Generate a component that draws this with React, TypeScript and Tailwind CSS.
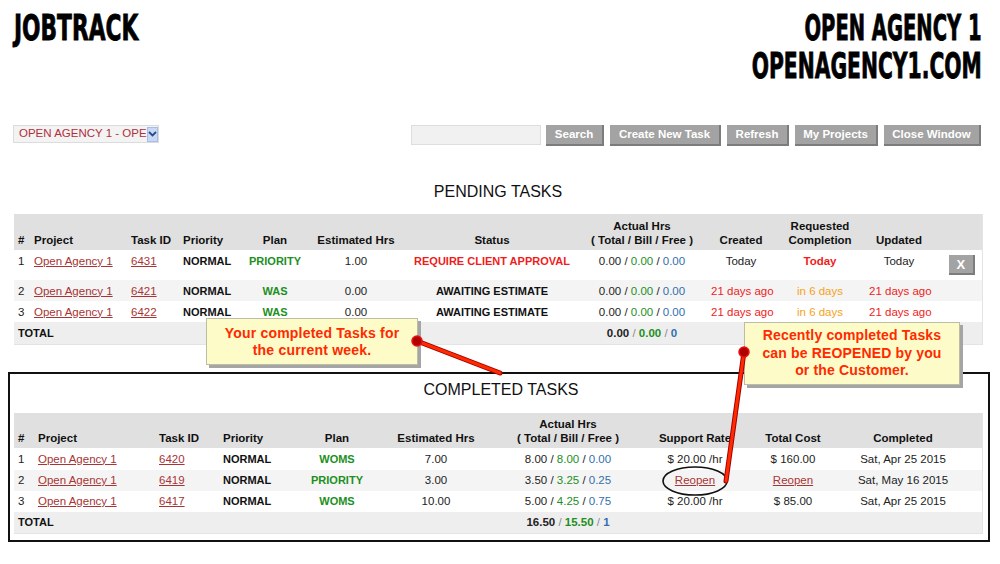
import type { ReactNode } from 'react';

const LINK = 'text-[#a83434] underline';
const GREEN = 'text-[#1d8f1d]';
const BLUE = 'text-[#336fae]';
const RED = 'text-[#f01c1c]';
const ORANGE = 'text-[#f5a31a]';

/** Gray toolbar button with the darker bottom/right edge. */
function GrayButton({ label, width }: { label: string; width: string }) {
  return (
    <button
      className={`${width} h-[21px] bg-[#a3a3a3] border-r-2 border-b-2 border-[#7c7c7c] text-white font-bold text-[11.5px] leading-none`}
    >
      {label}
    </button>
  );
}

function Hours({ total, bill, free, bold }: { total: string; bill: string; free: string; bold?: boolean }) {
  const slash = bold ? 'text-[#8a8a8a] font-normal' : '';
  return (
    <span className={bold ? 'font-bold' : ''}>
      {total}
      <span className={slash}> / </span>
      <span className={GREEN}>{bill}</span>
      <span className={slash}> / </span>
      <span className={BLUE}>{free}</span>
    </span>
  );
}

function Th({ children, left, className = '' }: { children?: ReactNode; left?: boolean; className?: string }) {
  return (
    <th
      className={`align-bottom pb-[3px] px-[4px] font-bold text-[#111] leading-[14px] whitespace-nowrap ${left ? 'text-left' : 'text-center'} ${className}`}
    >
      {children}
    </th>
  );
}

function Td({ children, left, className = '' }: { children?: ReactNode; left?: boolean; className?: string }) {
  return (
    <td
      className={`px-[4px] leading-[14px] whitespace-nowrap ${left ? 'text-left' : 'text-center'} ${className}`}
    >
      {children}
    </td>
  );
}

const PENDING = [
  {
    n: '1', id: '6431', plan: 'PRIORITY', est: '1.00',
    status: 'REQUIRE CLIENT APPROVAL', statusCls: RED,
    created: 'Today', createdCls: 'text-[#222]',
    req: 'Today', reqCls: `${RED} font-bold`,
    upd: 'Today', updCls: 'text-[#222]',
  },
  {
    n: '2', id: '6421', plan: 'WAS', est: '0.00',
    status: 'AWAITING ESTIMATE', statusCls: 'text-[#111]',
    created: '21 days ago', createdCls: RED,
    req: 'in 6 days', reqCls: ORANGE,
    upd: '21 days ago', updCls: RED,
  },
  {
    n: '3', id: '6422', plan: 'WAS', est: '0.00',
    status: 'AWAITING ESTIMATE', statusCls: 'text-[#111]',
    created: '21 days ago', createdCls: RED,
    req: 'in 6 days', reqCls: ORANGE,
    upd: '21 days ago', updCls: RED,
  },
];

const COMPLETED = [
  { n: '1', id: '6420', plan: 'WOMS', est: '7.00', hrs: ['8.00', '8.00', '0.00'], rate: '$ 20.00 /hr', cost: '$ 160.00', done: 'Sat, Apr 25 2015' },
  { n: '2', id: '6419', plan: 'PRIORITY', est: '3.00', hrs: ['3.50', '3.25', '0.25'], rate: '', cost: '', done: 'Sat, May 16 2015' },
  { n: '3', id: '6417', plan: 'WOMS', est: '10.00', hrs: ['5.00', '4.25', '0.75'], rate: '$ 20.00 /hr', cost: '$ 85.00', done: 'Sat, Apr 25 2015' },
];

function PendingTable() {
  return (
    <table className="table-fixed border-collapse w-[968px] text-[11.5px] text-[#222] border-r border-b border-[#e4e4e4]">
      <colgroup>
        <col className="w-[16px]" />
        <col className="w-[97px]" />
        <col className="w-[52px]" />
        <col className="w-[66px]" />
        <col className="w-[60px]" />
        <col className="w-[102px]" />
        <col className="w-[170px]" />
        <col className="w-[130px]" />
        <col className="w-[68px]" />
        <col className="w-[90px]" />
        <col className="w-[68px]" />
        <col className="w-[49px]" />
      </colgroup>
      <thead>
        <tr className="h-[36px] bg-[#e0e0e0]">
          <Th left>#</Th>
          <Th left>Project</Th>
          <Th left>Task ID</Th>
          <Th left>Priority</Th>
          <Th>Plan</Th>
          <Th>Estimated Hrs</Th>
          <Th>Status</Th>
          <Th>
            Actual Hrs
            <br />( Total / Bill / Free )
          </Th>
          <Th>Created</Th>
          <Th>
            Requested
            <br />
            Completion
          </Th>
          <Th>Updated</Th>
          <Th />
        </tr>
      </thead>
      <tbody>
        {PENDING.map((r, i) => {
          const first = i === 0;
          const rowCls = first ? 'h-[30px] bg-white [&>td]:align-top [&>td]:pt-[4px]' : i === 1 ? 'h-[21px] bg-[#f4f4f4]' : 'h-[21px] bg-white';
          return (
            <tr key={r.id} className={rowCls}>
              <Td left>{r.n}</Td>
              <Td left><span className={LINK}>Open Agency 1</span></Td>
              <Td left><span className={LINK}>{r.id}</span></Td>
              <Td left className="font-bold text-[11px] text-[#111]">NORMAL</Td>
              <Td className={`font-bold text-[11px] ${GREEN}`}>{r.plan}</Td>
              <Td>{r.est}</Td>
              <Td className={`font-bold text-[11px] ${r.statusCls}`}>{r.status}</Td>
              <Td><Hours total="0.00" bill="0.00" free="0.00" /></Td>
              <Td className={r.createdCls}>{r.created}</Td>
              <Td className={r.reqCls}>{r.req}</Td>
              <Td className={r.updCls}>{r.upd}</Td>
              <Td className={first ? '!pt-[5px]' : ''}>
                {first && (
                  <button className="w-[26px] h-[20px] ml-[9px] bg-[#a3a3a3] border-r-2 border-b-2 border-[#7c7c7c] text-white font-bold text-[13px] leading-none">
                    X
                  </button>
                )}
              </Td>
            </tr>
          );
        })}
        <tr className="h-[22px] bg-[#eeeeee]">
          <Td left className="font-bold text-[11px] text-[#111]">TOTAL</Td>
          <td colSpan={6} />
          <Td><Hours total="0.00" bill="0.00" free="0" bold /></Td>
          <td colSpan={4} />
        </tr>
      </tbody>
    </table>
  );
}

function CompletedTable() {
  return (
    <table className="table-fixed border-collapse w-[968px] text-[11.5px] text-[#222] border-r border-b border-[#e4e4e4]">
      <colgroup>
        <col className="w-[20px]" />
        <col className="w-[121px]" />
        <col className="w-[64px]" />
        <col className="w-[78px]" />
        <col className="w-[80px]" />
        <col className="w-[118px]" />
        <col className="w-[146px]" />
        <col className="w-[108px]" />
        <col className="w-[88px]" />
        <col className="w-[132px]" />
        <col className="w-[13px]" />
      </colgroup>
      <thead>
        <tr className="h-[35px] bg-[#e0e0e0]">
          <Th left>#</Th>
          <Th left>Project</Th>
          <Th left>Task ID</Th>
          <Th left>Priority</Th>
          <Th>Plan</Th>
          <Th>Estimated Hrs</Th>
          <Th>
            Actual Hrs
            <br />( Total / Bill / Free )
          </Th>
          <Th>Support Rate</Th>
          <Th>Total Cost</Th>
          <Th>Completed</Th>
          <Th />
        </tr>
      </thead>
      <tbody>
        {COMPLETED.map((r, i) => (
          <tr key={r.id} className={i === 0 ? 'h-[22px] bg-white' : i === 1 ? 'h-[21px] bg-[#f4f4f4]' : 'h-[21px] bg-white'}>
            <Td left>{r.n}</Td>
            <Td left><span className={LINK}>Open Agency 1</span></Td>
            <Td left><span className={LINK}>{r.id}</span></Td>
            <Td left className="font-bold text-[11px] text-[#111]">NORMAL</Td>
            <Td className={`font-bold text-[11px] ${GREEN}`}>{r.plan}</Td>
            <Td>{r.est}</Td>
            <Td><Hours total={r.hrs[0]} bill={r.hrs[1]} free={r.hrs[2]} /></Td>
            <Td>{r.rate || <span className={LINK}>Reopen</span>}</Td>
            <Td>{r.cost || <span className={LINK}>Reopen</span>}</Td>
            <Td>{r.done}</Td>
            <td />
          </tr>
        ))}
        <tr className="h-[22px] bg-[#eeeeee]">
          <Td left className="font-bold text-[11px] text-[#111]">TOTAL</Td>
          <td colSpan={5} />
          <Td><Hours total="16.50" bill="15.50" free="1" bold /></Td>
          <td colSpan={4} />
        </tr>
      </tbody>
    </table>
  );
}

export default function App() {
  // Condensed heavy brand lettering (Impact-like), squeezed per line.
  const heading = "font-['Liberation_Sans_Narrow','Arial_Narrow','DejaVu_Sans_Condensed',sans-serif] font-bold text-[35px] leading-[38px] text-black whitespace-nowrap [-webkit-text-stroke:0.8px_black]";
  return (
    <div className="relative w-[1000px] h-[564px] overflow-hidden bg-white font-['Liberation_Sans',Arial,sans-serif]">
      {/* Brand header */}
      <header className="flex justify-between pt-[9px] pl-[14px] pr-[18px]">
        <div className={`${heading} origin-left scale-x-[0.69]`}>JOBTRACK</div>
        <div className="flex flex-col items-end">
          <div className={`${heading} origin-right scale-x-[0.62]`}>OPEN AGENCY 1</div>
          <div className={`${heading} origin-right scale-x-[0.645]`}>OPENAGENCY1.COM</div>
        </div>
      </header>

      {/* Toolbar */}
      <div className="flex items-start justify-between mt-[40px] pl-[13px] pr-[19px]">
        <div className="flex items-center w-[146px] h-[18px] border border-[#dcdcdc] bg-[#f3f3f3]">
          <span className="flex-1 whitespace-nowrap pl-[5px] text-[11.5px] leading-none text-[#b0303a]">
            OPEN AGENCY 1 - OPE
          </span>
          <span className="flex items-center justify-center w-[15px] h-[15px] mr-[1px] bg-[#c9d9f5] border border-[#a8bde4]">
            <svg width="9" height="6" viewBox="0 0 9 6">
              <path d="M1 1 L4.5 4.5 L8 1" fill="none" stroke="#2c4a86" strokeWidth="1.8" />
            </svg>
          </span>
        </div>
        <div className="flex gap-[6px]">
          <div className="w-[130px] h-[20px] mr-[-1px] border border-[#dedede] bg-[#f1f1f1]" />
          <GrayButton label="Search" width="w-[58px]" />
          <GrayButton label="Create New Task" width="w-[111px]" />
          <GrayButton label="Refresh" width="w-[62px]" />
          <GrayButton label="My Projects" width="w-[83px]" />
          <GrayButton label="Close Window" width="w-[97px]" />
        </div>
      </div>

      {/* Pending */}
      <h2 className="mt-[37px] pl-[14px] pr-[18px] text-center text-[16px] leading-[18px] text-[#111]">PENDING TASKS</h2>
      <div className="mt-[13px] ml-[14px]">
        <PendingTable />
      </div>

      {/* Completed */}
      <section className="mt-[27px] ml-[8px] w-[982px] border-2 border-[#111] pt-[7px] pb-[6px] pl-[4px]">
        <h2 className="text-center text-[16px] leading-[18px] text-[#111]">COMPLETED TASKS</h2>
        <div className="mt-[14px]">
          <CompletedTable />
        </div>
      </section>

      {/* Callouts */}
      <div className="absolute left-[206px] top-[318px] w-[212px] h-[47px] flex flex-col justify-center bg-[#fdfbc8] border border-[#bdbca4] shadow-[3px_3px_0_#a5a5a5] text-center text-[14px] leading-[17px] font-bold tracking-[0.2px] text-[#ff2a00]">
        <div>Your completed Tasks for</div>
        <div>the current week.</div>
      </div>
      <div className="absolute left-[744px] top-[322px] w-[216px] h-[63px] flex flex-col justify-center bg-[#fdfbc8] border border-[#bdbca4] shadow-[3px_3px_0_#a5a5a5] text-center text-[14px] leading-[17.5px] font-bold tracking-[0.15px] text-[#ff2a00]">
        <div>Recently completed Tasks</div>
        <div>can be REOPENED by you</div>
        <div>or the Customer.</div>
      </div>

      <svg className="absolute inset-0 pointer-events-none" width="1000" height="564" viewBox="0 0 1000 564">
        <ellipse cx="695" cy="481" rx="32" ry="14" fill="none" stroke="#111" strokeWidth="1.6" />
        <line x1="417" y1="341" x2="500" y2="373" stroke="#a00000" strokeWidth="5" strokeLinecap="round" />
        <line x1="417" y1="341" x2="500" y2="373" stroke="#ff2a00" strokeWidth="3" strokeLinecap="round" />
        <line x1="744" y1="352" x2="726" y2="481" stroke="#a00000" strokeWidth="5" strokeLinecap="round" />
        <line x1="744" y1="352" x2="726" y2="481" stroke="#ff2a00" strokeWidth="3" strokeLinecap="round" />
        <circle cx="417" cy="341" r="5" fill="#b00000" stroke="#e81010" strokeWidth="1.5" />
        <circle cx="744" cy="352" r="5" fill="#b00000" stroke="#e81010" strokeWidth="1.5" />
      </svg>
    </div>
  );
}
